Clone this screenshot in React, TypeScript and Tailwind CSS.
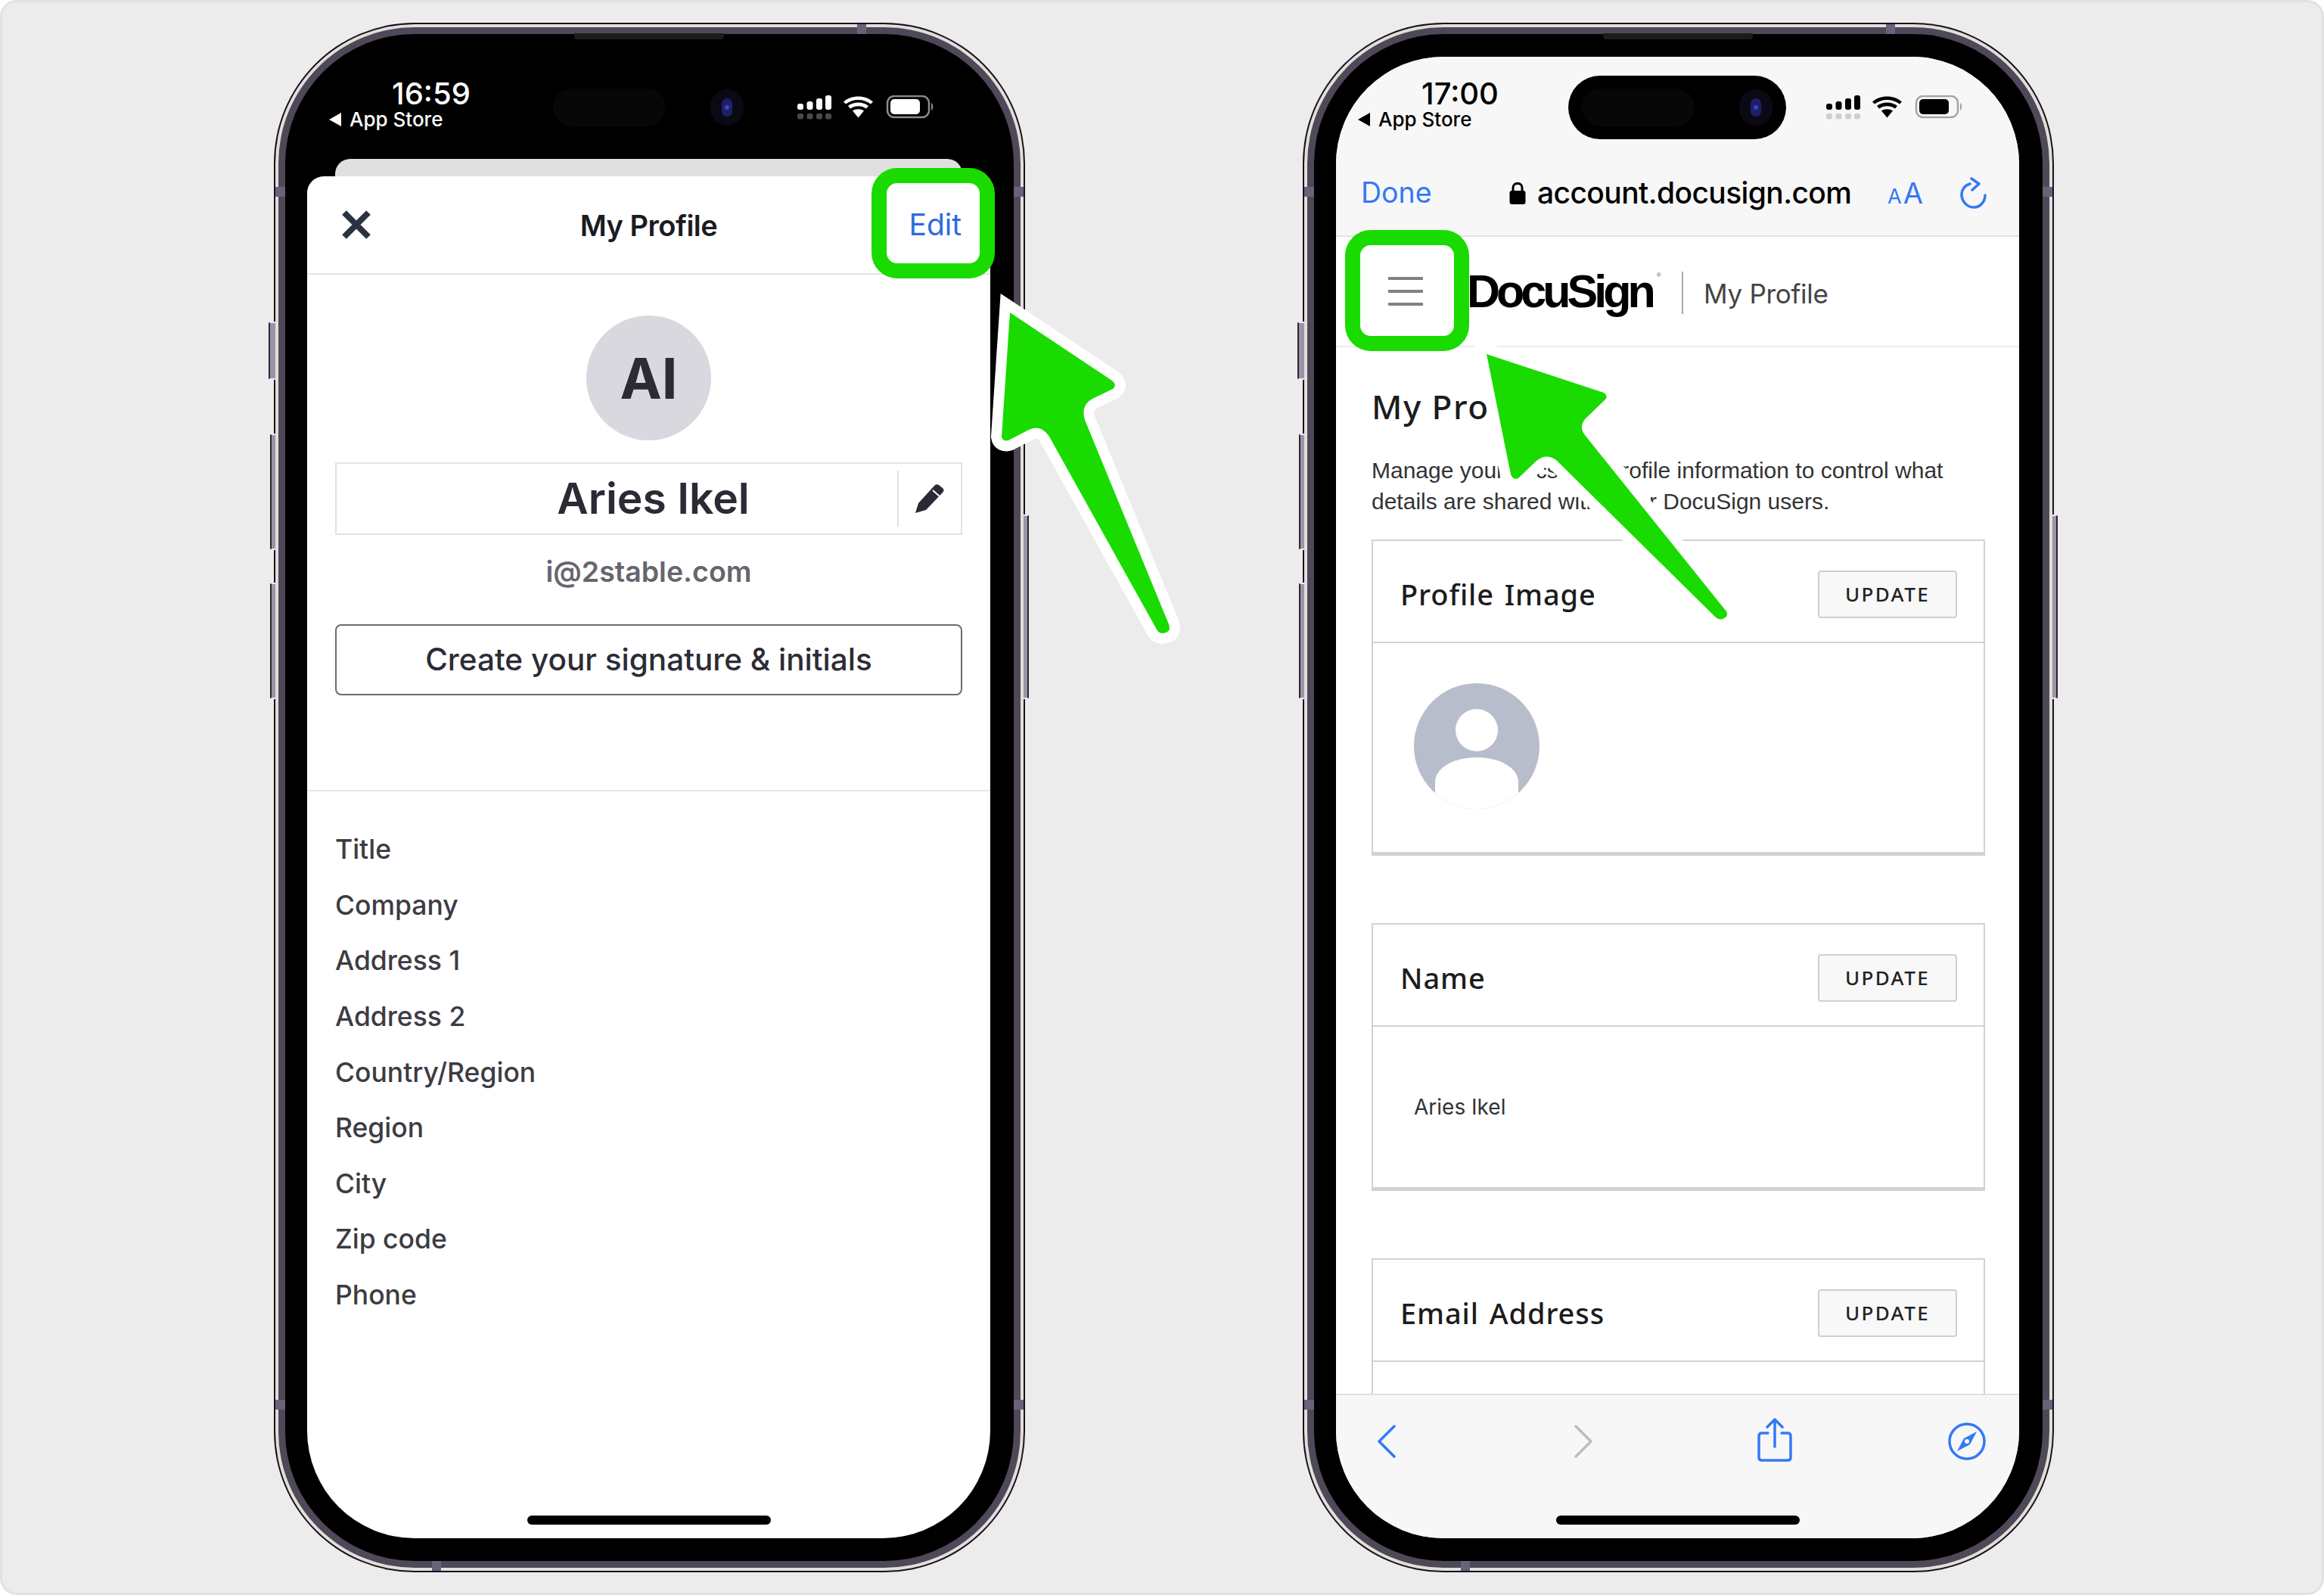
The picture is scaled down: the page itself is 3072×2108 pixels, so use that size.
import React from "react";

const inter = "font-['Inter',sans-serif]";
const maven = "font-['Noto_Sans',sans-serif]";

function StatusIcons({ dark }: { dark: boolean }) {
  const c = dark ? "#ffffff" : "#000000";
  const faint = dark ? "#4a4a4a" : "#cfcfcf";
  const border = dark ? "#8c8c8c" : "#a4a4a4";
  return (
    <svg width="182" height="34" viewBox="0 0 182 34" className="block">
      <rect x="0" y="11" width="8" height="8" rx="3" fill={c} />
      <rect x="12.5" y="8" width="8" height="11" rx="3" fill={c} />
      <rect x="25" y="4" width="8" height="15" rx="3" fill={c} />
      <rect x="37" y="0" width="8" height="19" rx="3" fill={c} />
      {[0, 12.5, 25, 37].map((x) => (
        <rect key={x} x={x} y="24" width="8" height="7.5" rx="2.5" fill={faint} />
      ))}
      <path d="M61 8.5 C71 -1 90 -1 100 8.5 L97 11.5 C88 4 73 4 64 11.5Z" fill={c} />
      <path d="M67 14 C74 8 87 8 94 14 L91 17.5 C85 13 76 13 70 17.5Z" fill={c} />
      <path d="M73 20.5 C77 17.5 84 17.5 88 20.5 L80.5 29.5Z" fill={c} />
      <rect x="119" y="1" width="55" height="28" rx="9" fill="none" stroke={border} strokeWidth="2.5" />
      <rect x="123" y="5" width="39" height="20" rx="5" fill={c} />
      <path d="M177 10 C180 11 180 19 177 20Z" fill={border} />
    </svg>
  );
}

function Status({ time, dark }: { time: string; dark: boolean }) {
  const text = dark ? "text-white" : "text-black";
  return (
    <div className={`flex h-[135px] shrink-0 ${text} ${inter}`}>
      <div className="flex w-[307px] flex-col pl-[29px] pt-[30px]">
        <div className="w-[270px] text-center text-[40px] font-medium leading-[38px]">{time}</div>
        <div className="flex items-center gap-[11px] text-[26px] font-medium leading-[30px]">
          <svg width="16" height="18" viewBox="0 0 16 18">
            <path d="M16 0V18L0 9Z" fill="currentColor" />
          </svg>
          <span>App Store</span>
        </div>
      </div>
      <div className="mt-[25px] flex h-[84px] w-[288px] items-center justify-between rounded-[42px] bg-black pl-[18px] pr-[18px]">
        <div className="h-[50px] w-[149px] rounded-[25px] bg-[#070707]" />
        <div className="flex h-[48px] w-[44px] items-center justify-center rounded-full bg-[#0b0a14]">
          <div className="flex h-[24px] w-[14px] items-center justify-center rounded-full bg-[#1d1f6e]">
            <div className="h-[6px] w-[6px] rounded-full bg-[#3a4ab0]" />
          </div>
        </div>
      </div>
      <div className="pl-[53px] pt-[51px]">
        <StatusIcons dark={dark} />
      </div>
    </div>
  );
}

function Phone({ children, screen }: { children: React.ReactNode; screen: string }) {
  const band = "absolute bg-[#6a6278]";
  const btn = "absolute rounded-l-[3px] border-2 border-r-0 border-[#2a2530] bg-[#9b94a8] border-y-[#efeaf0]";
  return (
    <div className="relative h-[2048px] w-[993px] shrink-0">
      <div className={`${btn} left-[-7px] top-[395px] h-[77px] w-[9px]`} />
      <div className={`${btn} left-[-5px] top-[543px] h-[154px] w-[7px]`} />
      <div className={`${btn} left-[-5px] top-[740px] h-[154px] w-[7px]`} />
      <div className="absolute right-[-5px] top-[650px] h-[244px] w-[7px] rounded-r-[3px] border-2 border-l-0 border-[#2a2530] border-y-[#efeaf0] bg-[#9b94a8]" />
      <div className="h-full rounded-[186px] bg-[#17131c] p-[2px]">
        <div className="h-full rounded-[184px] bg-[#e3deda] p-[4px]">
          <div className="h-full rounded-[180px] bg-[#4f4859] p-[9px]">
            <div className="h-full rounded-[171px] bg-black py-[30px] pl-[29px] pr-[31px]">
              <div className={`relative flex h-full flex-col overflow-hidden rounded-[142px] ${screen}`}>{children}</div>
            </div>
          </div>
        </div>
      </div>
      <div className={`${band} left-[771px] top-[2px] h-[13px] w-[12px]`} />
      <div className={`${band} left-[209px] bottom-[2px] h-[13px] w-[12px]`} />
      <div className={`${band} left-[2px] top-[217px] h-[13px] w-[13px]`} />
      <div className={`${band} left-[2px] top-[1820px] h-[13px] w-[13px]`} />
      <div className={`${band} right-[2px] top-[217px] h-[13px] w-[13px]`} />
      <div className={`${band} right-[2px] top-[1820px] h-[13px] w-[13px]`} />
      <div className="absolute left-[397px] top-[14px] h-[8px] w-[198px] rounded-b-[4px] bg-[#1c1c1c]" />
    </div>
  );
}

function HomeBar({ left }: { left: string }) {
  return <div className={`absolute bottom-[18px] ${left} h-[12px] w-[322px] rounded-[6px] bg-black`} />;
}

const fields = ["Title", "Company", "Address 1", "Address 2", "Country/Region", "Region", "City", "Zip code", "Phone"];

function LeftScreen() {
  return (
    <>
      <Status time="16:59" dark />
      <div className="mx-[37px] h-[23px] shrink-0 rounded-t-[20px] bg-[#e0e0e0]" />
      <div className={`flex flex-1 flex-col rounded-t-[22px] bg-white ${inter}`}>
        <div className="flex h-[130px] shrink-0 items-center border-b-2 border-[#e4e4e4] pl-[45px] pr-[38px]">
          <div className="flex-1">
            <svg width="40" height="40" viewBox="0 0 40 40" className="block">
              <path d="M4 4L36 36M36 4L4 36" stroke="#2b3340" strokeWidth="8" />
            </svg>
          </div>
          <div className="mr-[7px] mt-[2px] text-[38px] font-semibold tracking-[-0.5px] text-[#1b1b22]">My Profile</div>
          <div className="flex-1 text-right text-[39px] text-[#2f6ae0]">Edit</div>
        </div>
        <div className="flex flex-col items-center px-[37px]">
          <div className="mt-[54px] flex h-[165px] w-[165px] items-center justify-center rounded-full bg-[#d8d8de] pt-[2px] text-[74px] font-bold text-[#2b2a35]">
            AI
          </div>
          <div className="mt-[29px] flex h-[96px] w-full items-center border-2 border-[#e2e2e5]">
            <div className="flex-1 pl-[96px] text-center text-[57px] font-semibold text-[#2b2a35]">Aries Ikel</div>
            <div className="flex h-[74px] w-[84px] items-center justify-center border-l-2 border-[#e2e2e5]">
              <svg width="40" height="40" viewBox="0 0 40 40">
                <path d="M1 39L5 26L26 3C28 1 30 1 32 2L37 6C39 8 39 10 37 12L15 35Z" fill="#2b2a35" />
                <path d="M24 9L33 17" stroke="#fff" strokeWidth="2" />
              </svg>
            </div>
          </div>
          <div className="mt-[24px] text-[37.5px] font-semibold leading-[50px] text-[#66666e]">i@2stable.com</div>
          <div className="mt-[44px] flex h-[94px] w-full items-center justify-center rounded-[8px] border-2 border-[#6c6c72] text-[40.5px] font-medium text-[#2c2c36]">
            Create your signature &amp; initials
          </div>
        </div>
        <div className="mt-[125px] border-t-2 border-[#e6e6e6] px-[37px] pt-[40px]">
          {fields.map((f) => (
            <div key={f} className="flex h-[73.6px] items-center text-[35.5px] font-medium text-[#3c3c44]">
              {f}
            </div>
          ))}
        </div>
      </div>
      <HomeBar left="left-[291px]" />
    </>
  );
}

function Card({ title, bodyH, children }: { title: string; bodyH: string; children?: React.ReactNode }) {
  return (
    <div className="shrink-0 border-2 border-b-[5px] border-[#d2d2d2]">
      <div className="flex h-[135px] items-center justify-between border-b-2 border-[#d2d2d2] pl-[36px] pr-[35px] pt-[7px]">
        <div className={`${maven} text-[38px] font-medium tracking-[0.9px] text-[#1c1c1c] [word-spacing:3px]`}>{title}</div>
        <div className={`flex h-[63px] w-[184px] items-center justify-center rounded-[4px] border-2 border-[#cfcfcf] bg-[#f8f8f8] ${maven} text-[26px] font-medium tracking-[2.4px] text-[#222]`}>
          UPDATE
        </div>
      </div>
      <div className={bodyH}>{children}</div>
    </div>
  );
}

function RightScreen() {
  return (
    <>
      <div className="shrink-0 border-b-2 border-[#e2e2e2] bg-[#f7f7f7]">
        <Status time="17:00" dark={false} />
        <div className={`mb-[11px] flex h-[90px] items-center ${inter}`}>
          <div className="ml-[33px] w-[91px] text-[37.5px] text-[#3478f6]">Done</div>
          <svg width="22" height="29" viewBox="0 0 22 29" className="ml-[105px]">
            <rect x="0.5" y="11" width="21" height="18" rx="3" fill="#000" />
            <path d="M5 12V7C5 -0.5 17 -0.5 17 7V12" fill="none" stroke="#000" strokeWidth="3" />
          </svg>
          <div className="ml-[15px] w-[416px] whitespace-nowrap text-[39px] font-medium tracking-[-0.6px] text-black">account.docusign.com</div>
          <div className="ml-[47px] flex w-[46px] items-baseline gap-[2px] text-[#3478f6]">
            <span className="text-[27px]">A</span>
            <span className="text-[38px]">A</span>
          </div>
          <svg width="36" height="42" viewBox="0 0 36 42" className="ml-[50px]" fill="none" stroke="#3478f6" strokeWidth="3.5" strokeLinecap="round" strokeLinejoin="round">
            <path d="M13 9C6 11 2 17 2 23C2 32 9 40 18 40C27 40 33 32 33 24" />
            <path d="M15 2L25 9L16 17" />
          </svg>
        </div>
      </div>
      <div className="flex h-[146px] shrink-0 items-center border-b-2 border-[#ececec] bg-white">
        <svg width="46" height="38" viewBox="0 0 46 38" className="ml-[69px]">
          <path d="M0 2H46M0 19H46M0 36H46" stroke="#808085" strokeWidth="4" />
        </svg>
        <div className="ml-[58px] flex w-[251px] items-start font-['Liberation_Sans',sans-serif] text-[61px] font-bold leading-[70px] tracking-[-5px] text-black">
          DocuSign<span className="ml-[6px] mt-[10px] text-[8px] font-normal leading-[8px] tracking-normal text-[#666]">®</span>
        </div>
        <div className="ml-[33px] mt-[4px] h-[56px] w-[2px] bg-[#a8a8a8]" />
        <div className={`ml-[27px] mt-[6px] ${inter} text-[35px] tracking-[-0.3px] text-[#444]`}>My Profile</div>
      </div>
      <div className="flex min-h-0 flex-1 flex-col overflow-hidden bg-white pl-[47px] pr-[45px]">
        <div className={`mt-[48px] shrink-0 ${maven} text-[44px] font-medium leading-[60px] tracking-[1.5px] text-[#1c1c1c]`}>My Profile</div>
        <div className="mt-[34px] w-[770px] shrink-0 font-['Liberation_Sans',sans-serif] text-[30px] leading-[41px] text-[#333]">
          Manage your docs and profile information to control what details are shared with other DocuSign users.
        </div>
        <div className="mt-[30px] flex flex-col gap-[89px]">
          <Card title="Profile Image" bodyH="h-[276px] pl-[54px] pt-[53px]">
            <svg width="166" height="166" viewBox="0 0 166 166" className="block">
              <defs>
                <clipPath id="avatarClip">
                  <circle cx="83" cy="83" r="83" />
                </clipPath>
              </defs>
              <circle cx="83" cy="83" r="83" fill="#b8bdcb" />
              <ellipse cx="83" cy="62" rx="28" ry="28" fill="#fff" />
              <g clipPath="url(#avatarClip)">
                <path d="M28 170V131C28 112 52 98 83 98C114 98 138 112 138 131V170Z" fill="#fff" />
              </g>
            </svg>
          </Card>
          <Card title="Name" bodyH="h-[212px] flex items-center pl-[54px]">
            <div className={`${inter} text-[28px] text-[#333]`}>Aries Ikel</div>
          </Card>
          <Card title="Email Address" bodyH="h-[212px]" />
        </div>
      </div>
      <div className="flex h-[191px] shrink-0 items-start border-t-2 border-[#e0e0e0] bg-[#f7f7f7]">
        <svg width="24" height="44" viewBox="0 0 24 44" className="ml-[55px] mt-[39px]" fill="none" stroke="#3478f6" strokeWidth="3.5" strokeLinecap="round" strokeLinejoin="round">
          <path d="M22 2L2 22L22 42" />
        </svg>
        <svg width="24" height="44" viewBox="0 0 24 44" className="ml-[236px] mt-[39px]" fill="none" stroke="#bdbdbd" strokeWidth="3.5" strokeLinecap="round" strokeLinejoin="round">
          <path d="M2 2L22 22L2 42" />
        </svg>
        <svg width="46" height="58" viewBox="0 0 46 58" className="ml-[218px] mt-[30px]" fill="none" stroke="#3478f6" strokeWidth="3.5" strokeLinecap="round" strokeLinejoin="round">
          <path d="M14 20H6C3.5 20 2 21.5 2 24V52C2 54.5 3.5 56 6 56H40C42.5 56 44 54.5 44 52V24C44 21.5 42.5 20 40 20H32" />
          <path d="M23 38V3M13 12L23 2L33 12" />
        </svg>
        <svg width="50" height="50" viewBox="0 0 50 50" className="ml-[206px] mt-[36px]">
          <circle cx="25" cy="25" r="23" fill="none" stroke="#3478f6" strokeWidth="3.5" />
          <path d="M38 12L29 29L12 38L21 21Z" fill="#3478f6" />
          <circle cx="25" cy="25" r="3" fill="#f7f7f7" />
        </svg>
      </div>
      <HomeBar left="left-[291px]" />
    </>
  );
}

function Highlight({ pos }: { pos: string }) {
  return <div className={`absolute z-20 rounded-[34px] border-[20px] border-[#1adb00] ${pos}`} />;
}

const arrowLeft =
  "M1335 413L1470 503Q1477 509 1471 514L1444 527Q1428 536 1434 555L1545 825Q1548 834 1541 836Q1533 839 1529 832L1387 577Q1376 560 1360 568L1333 582Q1325 584 1324 577Z";
const arrowRight =
  "M1965 468L2120 519Q2126 523 2122 528L2097 552Q2086 563 2095 575L2282 808Q2285 814 2279 817Q2273 821 2267 815L2057 608Q2043 598 2030 610L2007 632Q2000 635 1997 627Z";

export default function App() {
  return (
    <div className="relative h-[2108px] w-[3072px] overflow-hidden bg-white">
      <div className="flex h-full gap-[367px] rounded-[22px] border-[3px] border-[#e2e2e2] bg-[#ececec] pl-[359px] pt-[27px]">
        <Phone screen="bg-black">
          <LeftScreen />
        </Phone>
        <Phone screen="bg-white">
          <RightScreen />
        </Phone>
      </div>
      <svg width="3072" height="2108" viewBox="0 0 3072 2108" className="absolute left-0 top-0 z-10">
        <path d={arrowLeft} fill="#1adb00" stroke="#fff" strokeWidth="28" strokeLinejoin="miter" strokeMiterlimit={8} style={{ paintOrder: "stroke" }} />
        <path d={arrowRight} fill="#1adb00" stroke="#fff" strokeWidth="28" strokeLinejoin="miter" strokeMiterlimit={8} style={{ paintOrder: "stroke" }} />
      </svg>
      <Highlight pos="left-[1152px] top-[222px] h-[146px] w-[163px]" />
      <Highlight pos="left-[1778px] top-[304px] h-[160px] w-[164px]" />
    </div>
  );
}
